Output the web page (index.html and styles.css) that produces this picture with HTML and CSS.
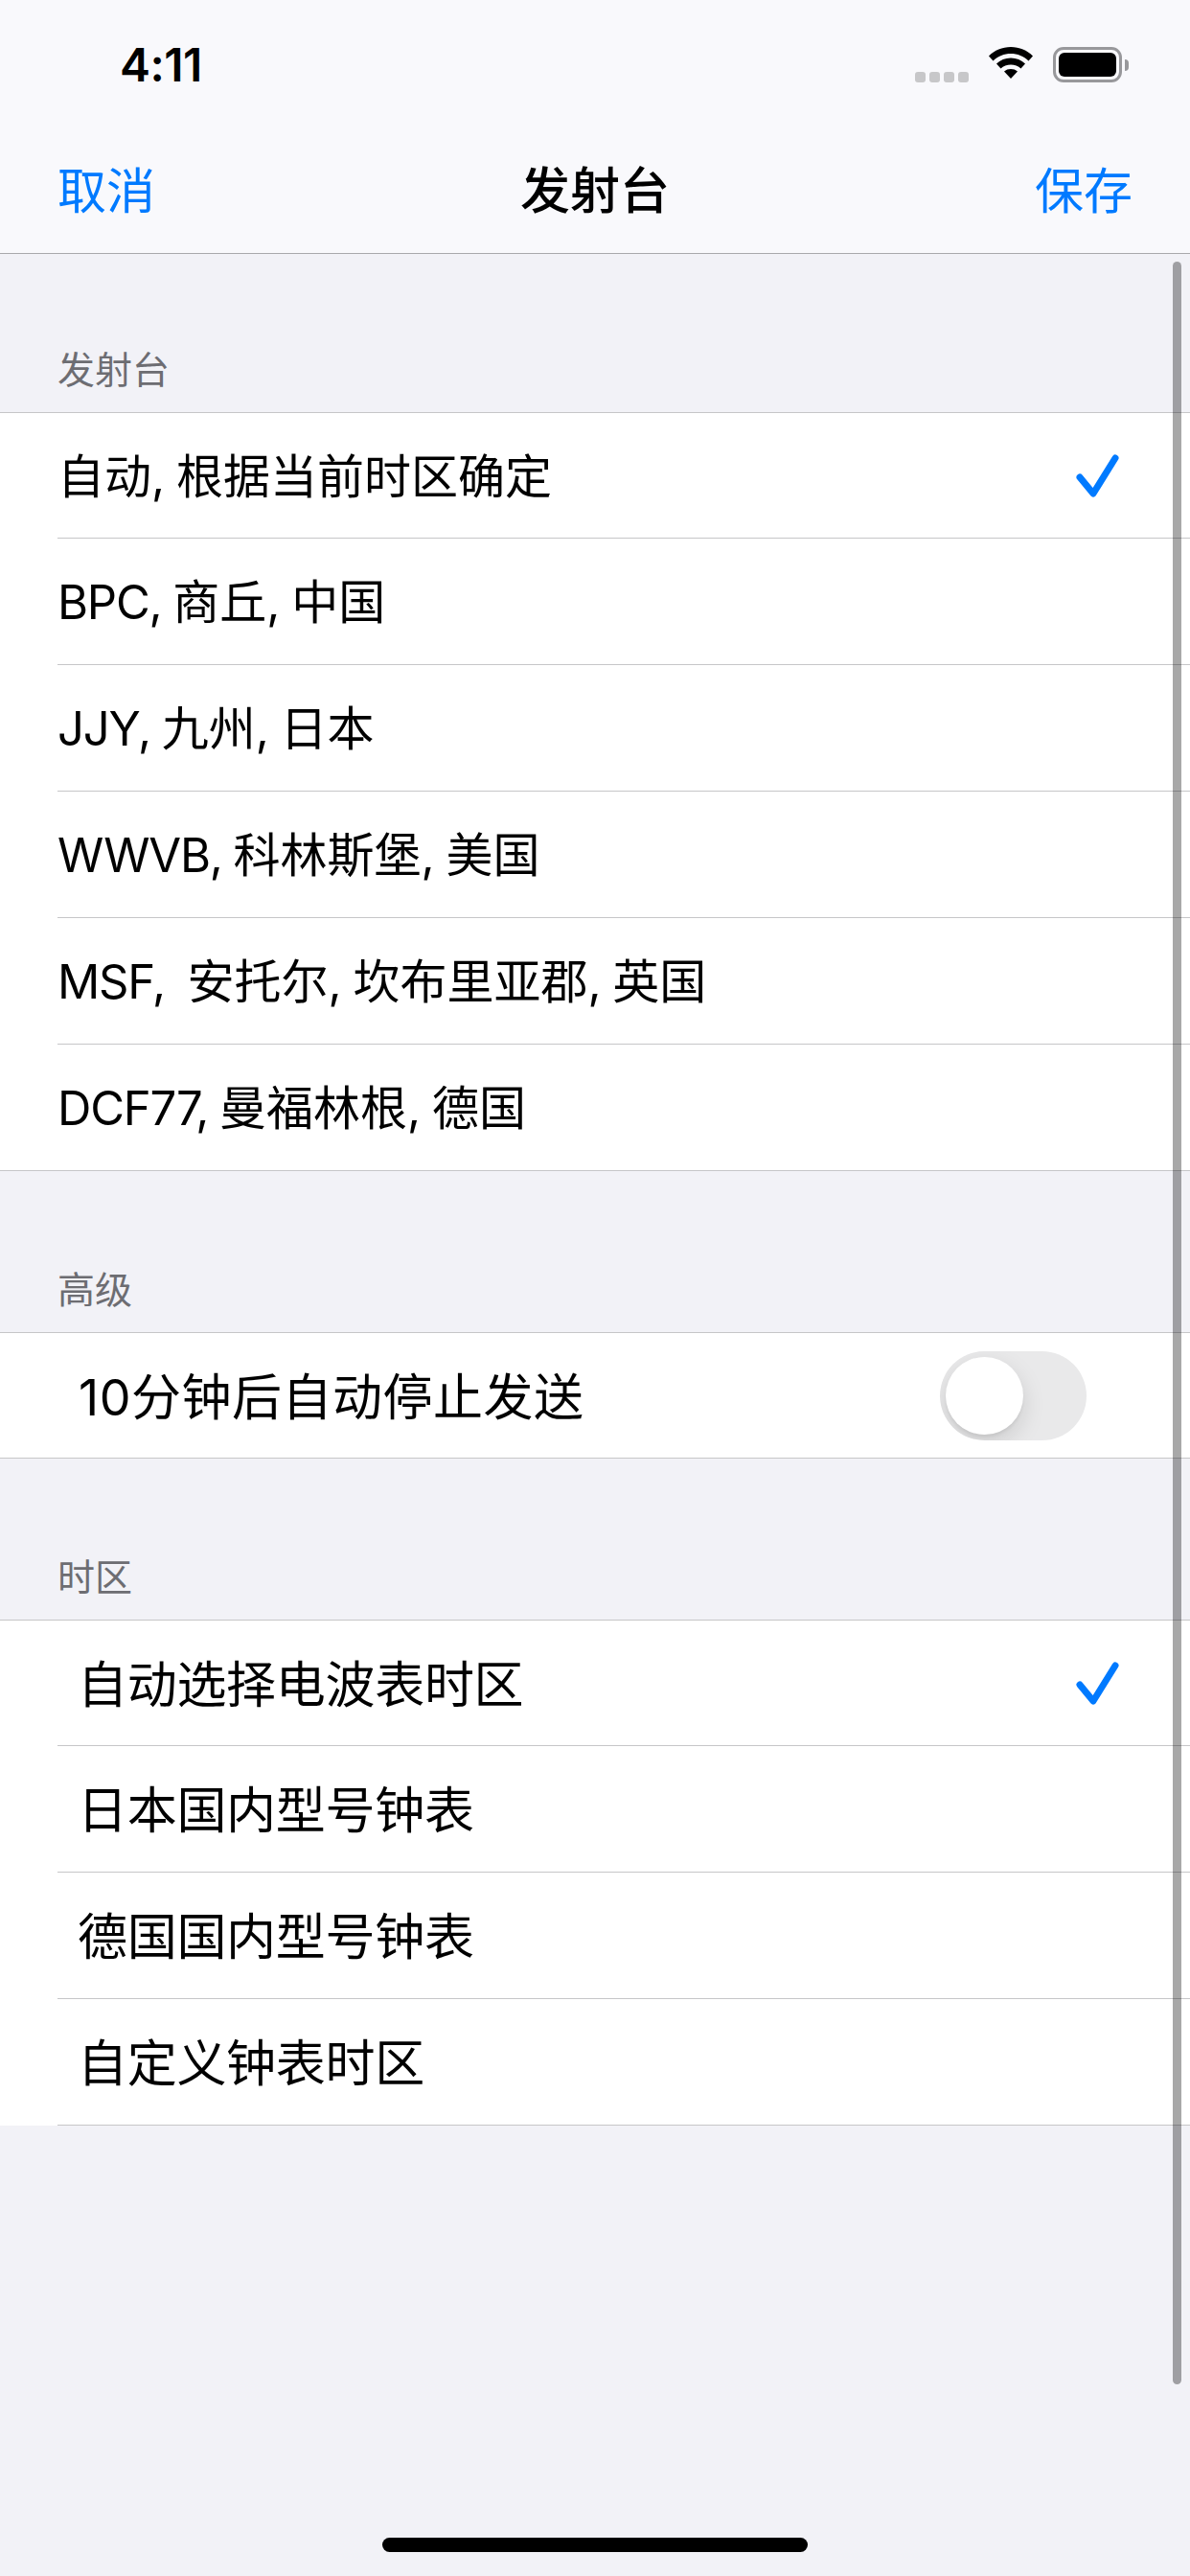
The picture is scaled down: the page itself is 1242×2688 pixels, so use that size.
FILE: index.html
```html
<!DOCTYPE html>
<html lang="zh-CN">
<head>
    <meta charset="UTF-8">
    <title>发射台</title>
    <link rel="stylesheet" href="styles.css">
</head>
<body>
    <div class="phone">
        <header class="top-bar">
            <div class="status-bar">
                <span class="time">4:11</span>
                <div class="status-icons">
                    <div class="signal"><i></i><i></i><i></i><i></i></div>
                    <svg class="wifi" width="48" height="36" viewBox="0 0 48 36">
                        <path d="M1 12.500C7 6.500 15 3 24 3s17 3.500 23 9.500l-4.500 5C37.500 12.500 31 10 24 10S10.500 12.500 5.500 17.500z" fill="#000"/>
                        <path d="M9 20.500C13 16.700 18.200 14.500 24 14.500s11 2.200 15 6l-4.500 5C31.800 23 28 21.500 24 21.500S16.200 23 13.500 25.500z" fill="#000"/>
                        <path d="M17 28.500C19 26.800 21.400 26 24 26s5 .8 7 2.500L24 36z" fill="#000"/>
                    </svg>
                    <div class="battery">
                        <div class="battery-body"><div class="battery-fill"></div></div>
                        <div class="battery-cap"></div>
                    </div>
                </div>
            </div>
            <nav class="nav-bar">
                <span class="nav-btn">取消</span>
                <span class="nav-title">发射台</span>
                <span class="nav-btn">保存</span>
            </nav>
        </header>

        <main class="content">
            <div class="section-label first">发射台</div>
            <div class="group small">
                <div class="row"><span class="row-text">自动, 根据当前时区确定</span>
                    <svg class="check" width="48" height="48" viewBox="0 0 48 48"><path d="M5 26l14 17L42 6" fill="none" stroke="#007aff" stroke-width="7" stroke-linecap="round" stroke-linejoin="round"/></svg>
                </div>
                <div class="row"><span class="row-text"><span class="latin">BPC,</span> 商丘, 中国</span></div>
                <div class="row"><span class="row-text"><span class="latin">JJY,</span> 九州, 日本</span></div>
                <div class="row"><span class="row-text"><span class="latin">WWVB,</span> 科林斯堡, 美国</span></div>
                <div class="row"><span class="row-text"><span class="latin">MSF,</span>&nbsp; 安托尔, 坎布里亚郡, 英国</span></div>
                <div class="row full"><span class="row-text"><span class="latin">DCF77,</span> 曼福林根, 德国</span></div>
            </div>

            <div class="section-label">高级</div>
            <div class="group">
                <div class="row full toggle-row"><span class="row-text">10分钟后自动停止发送</span>
                    <div class="toggle"><div class="thumb"></div></div>
                </div>
            </div>

            <div class="section-label">时区</div>
            <div class="group indented">
                <div class="row"><span class="row-text">自动选择电波表时区</span>
                    <svg class="check" width="48" height="48" viewBox="0 0 48 48"><path d="M5 26l14 17L42 6" fill="none" stroke="#007aff" stroke-width="7" stroke-linecap="round" stroke-linejoin="round"/></svg>
                </div>
                <div class="row"><span class="row-text">日本国内型号钟表</span></div>
                <div class="row"><span class="row-text">德国国内型号钟表</span></div>
                <div class="row"><span class="row-text">自定义钟表时区</span></div>
            </div>
        </main>

        <div class="scrollbar"></div>
        <div class="home-bar"></div>
    </div>
</body>
</html>
```
FILE: styles.css
```css
* {
    margin: 0;
    padding: 0;
    box-sizing: border-box;
}

body {
    font-family: Inter, "Noto Sans CJK SC", sans-serif;
    background-color: #f2f2f7;
    color: #000;
}

.phone {
    position: relative;
    width: 1242px;
    height: 2688px;
    overflow: hidden;
    background-color: #f2f2f7;
}

/* status + nav */
.top-bar {
    height: 265px;
    background-color: #f9f9fc;
    border-bottom: 1px solid #a9a9ac;
}

.status-bar {
    height: 132px;
    display: flex;
    justify-content: space-between;
    align-items: flex-start;
    padding: 42px 0 0 125px;
}

.time {
    font-size: 48px;
    line-height: 52px;
    font-weight: 600;
    letter-spacing: -0.5px;
}

.status-icons {
    display: flex;
    align-items: flex-start;
    padding-top: 6px;
    margin-right: 64px;
}

.signal {
    display: flex;
    gap: 4px;
    margin: 27px 20px 0 0;
}

.signal i {
    display: block;
    width: 11px;
    height: 11px;
    border-radius: 3px;
    background-color: #c7c7c9;
}

.wifi {
    margin: -2px 20px 0 0;
}

.battery {
    display: flex;
    align-items: center;
    margin-top: 1px;
}

.battery-body {
    width: 72px;
    height: 37px;
    padding: 3px;
    border: 3px solid #98989b;
    border-radius: 11px;
}

.battery-fill {
    width: 100%;
    height: 100%;
    background-color: #000;
    border-radius: 6px;
}

.battery-cap {
    width: 4px;
    height: 12px;
    margin-left: 3px;
    background-color: #98989b;
    border-radius: 0 4px 4px 0;
}

.nav-bar {
    height: 132px;
    display: flex;
    justify-content: space-between;
    align-items: center;
    padding: 0 60px 5px;
}

.nav-btn {
    font-size: 51px;
    color: #007aff;
}

.nav-title {
    font-size: 52px;
    font-weight: 500;
}

/* list */
.section-label {
    height: 168px;
    padding: 0 0 21px 60px;
    display: flex;
    align-items: flex-end;
    font-size: 39px;
    line-height: 46px;
    color: #6d6d72;
}

.section-label.first {
    height: 165px;
}

.group {
    background-color: #fff;
    border-top: 1px solid #c6c6c8;
}

.row {
    height: 132px;
    margin-left: 60px;
    padding-right: 72px;
    display: flex;
    justify-content: space-between;
    align-items: center;
    border-bottom: 1px solid #c6c6c8;
    font-size: 52px;
}

.row:first-child {
    height: 131px;
}

.row-text {
    white-space: nowrap;
    margin-bottom: 4px;
}

.group.small .row {
    font-size: 49px;
    word-spacing: -2px;
}

.group.small .row-text {
    margin-bottom: 6px;
}

.latin {
    letter-spacing: -1.2px;
}

/* separator runs edge to edge on the last row of a group */
.row.full {
    margin-left: 0;
    padding-left: 60px;
}

.group.indented .row-text {
    margin-left: 21px;
    letter-spacing: -0.3px;
}

.toggle-row {
    padding-right: 108px;
}

.row.toggle-row {
    padding-left: 82px;
}

.toggle-row .row-text {
    letter-spacing: 0.5px;
}

.toggle {
    position: relative;
    width: 153px;
    height: 93px;
    border-radius: 47px;
    background-color: #e9e9ea;
    overflow: hidden;
}

.thumb {
    position: absolute;
    left: 6px;
    top: 6px;
    width: 81px;
    height: 81px;
    border-radius: 50%;
    background-color: #fff;
    box-shadow: 0 9px 24px rgba(0, 0, 0, 0.13), 0 3px 3px rgba(0, 0, 0, 0.05);
}

/* overlays */
.scrollbar {
    position: absolute;
    left: 1224px;
    top: 273px;
    width: 9px;
    height: 2215px;
    border-radius: 5px;
    background-color: rgba(0, 0, 0, 0.34);
}

.home-bar {
    position: absolute;
    left: 399px;
    top: 2648px;
    width: 444px;
    height: 15px;
    border-radius: 8px;
    background-color: #000;
}
```
